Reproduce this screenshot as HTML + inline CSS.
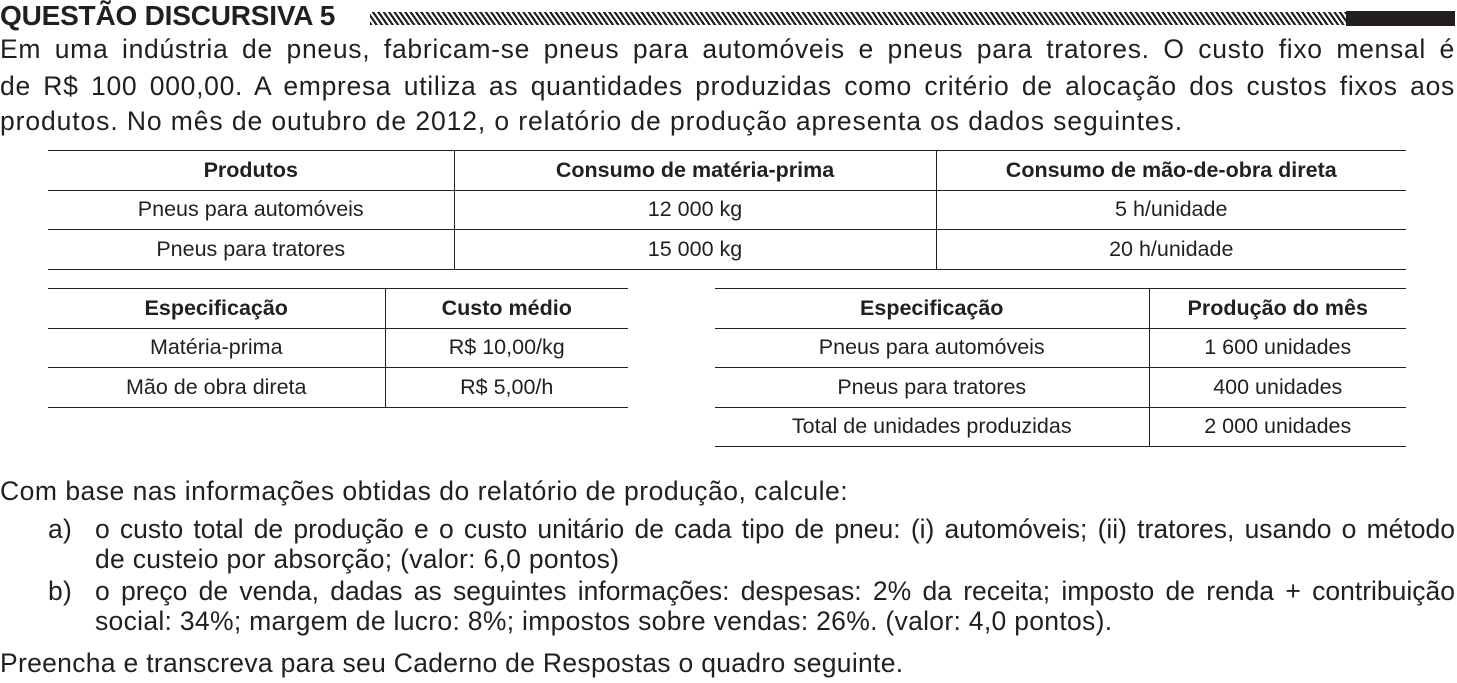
<!DOCTYPE html>
<html><head><meta charset="utf-8"><style>
*{margin:0;padding:0;box-sizing:border-box}
body{width:1457px;height:683px;background:#fff;color:#231f20;font-family:"Liberation Sans",sans-serif;position:relative;overflow:hidden}
.h{position:absolute;left:0;top:0px;font-weight:bold;font-size:28px;letter-spacing:-0.2px;transform:scaleX(1.0);transform-origin:left}
.hatch{position:absolute;left:370px;top:12px;width:976px;height:13px;background:repeating-linear-gradient(55deg,#231f20 0 2.2px,#fff 2.2px 4.4px)}
.bar{position:absolute;left:1346px;top:11px;width:109px;height:15px;background:#231f20}
.p{position:absolute;left:0;width:1455px;font-size:26.5px;text-align:justify;text-align-last:justify;white-space:nowrap;letter-spacing:0.7px}
.t{position:absolute;font-size:21.5px;}
table{border-collapse:collapse;width:100%}
td{border-top:1.5px solid #231f20;border-bottom:1.5px solid #231f20;height:39.5px;text-align:center;padding:0}
td+td{border-left:1.5px solid #231f20}
tr:first-child td{font-weight:bold}
.q{position:absolute;font-size:26.5px;white-space:nowrap;letter-spacing:0.3px}
</style></head><body>
<div class="h">QUESTÃO DISCURSIVA 5</div>
<div class="hatch"></div><div class="bar"></div>
<div class="p" style="top:34px">Em uma indústria de pneus, fabricam-se pneus para automóveis e pneus para tratores. O custo fixo mensal é</div>
<div class="p" style="top:71px">de R$ 100 000,00. A empresa utiliza as quantidades produzidas como critério de alocação dos custos fixos aos</div>
<div class="p" style="top:106px;width:auto;text-align:left;text-align-last:left;letter-spacing:0.9px">produtos. No mês de outubro de 2012, o relatório de produção apresenta os dados seguintes.</div>
<div class="t" style="left:48px;top:150px;width:1358px"><table>
<tr><td style="width:406px">Produtos</td><td style="width:482px">Consumo de matéria-prima</td><td>Consumo de mão-de-obra direta</td></tr>
<tr><td>Pneus para automóveis</td><td>12 000 kg</td><td>5 h/unidade</td></tr>
<tr><td>Pneus para tratores</td><td>15 000 kg</td><td>20 h/unidade</td></tr></table></div>
<div class="t" style="left:48px;top:288px;width:580px"><table>
<tr><td style="width:337px">Especificação</td><td>Custo médio</td></tr>
<tr><td>Matéria-prima</td><td>R$ 10,00/kg</td></tr>
<tr><td>Mão de obra direta</td><td>R$ 5,00/h</td></tr></table></div>
<div class="t" style="left:715px;top:288px;width:691px"><table>
<tr><td style="width:434px">Especificação</td><td>Produção do mês</td></tr>
<tr><td>Pneus para automóveis</td><td>1 600 unidades</td></tr>
<tr><td>Pneus para tratores</td><td>400 unidades</td></tr>
<tr><td>Total de unidades produzidas</td><td>2 000 unidades</td></tr></table></div>
<div class="q" style="left:0;top:476px;letter-spacing:0.5px">Com base nas informações obtidas do relatório de produção, calcule:</div>
<div class="q" style="left:48px;top:514px">a)</div>
<div class="q" style="left:95px;top:514px;width:1360px;text-align:justify;text-align-last:justify;letter-spacing:0">o custo total de produção e o custo unitário de cada tipo de pneu: (i) automóveis; (ii) tratores, usando o método</div>
<div class="q" style="left:95px;top:544px">de custeio por absorção; (valor: 6,0 pontos)</div>
<div class="q" style="left:48px;top:576px">b)</div>
<div class="q" style="left:95px;top:576px;width:1360px;text-align:justify;text-align-last:justify;letter-spacing:0">o preço de venda, dadas as seguintes informações: despesas: 2% da receita; imposto de renda + contribuição</div>
<div class="q" style="left:95px;top:606px">social: 34%; margem de lucro: 8%; impostos sobre vendas: 26%. (valor: 4,0 pontos).</div>
<div class="q" style="left:0;top:648px">Preencha e transcreva para seu Caderno de Respostas o quadro seguinte.</div>
</body></html>
